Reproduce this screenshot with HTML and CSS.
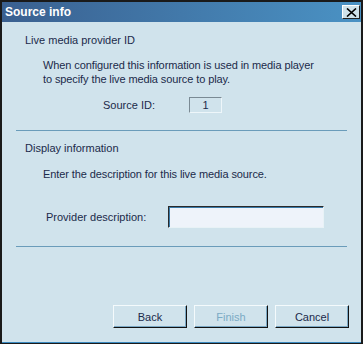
FILE: index.html
```html
<!DOCTYPE html>
<html>
<head>
<meta charset="utf-8">
<link rel="stylesheet" href="styles.css">
</head>
<body>
<div class="window">
  <div class="titlebar">
    <span class="title">Source info</span>
    <span class="close"><svg width="11" height="9" viewBox="0 0 11 9"><path d="M1 0.5 L10 8.5 M10 0.5 L1 8.5" stroke="#000" stroke-width="1.6"/></svg></span>
  </div>
  <div class="body">
    <section class="group">
      <div class="heading">Live media provider ID</div>
      <p class="desc">When configured this information is used in media player<br>to specify the live media source to play.</p>
      <div class="row id-row">
        <span class="label">Source ID:</span>
        <span class="idbox">1</span>
      </div>
    </section>
    <hr class="sep sep1">
    <section class="group">
      <div class="heading">Display information</div>
      <p class="desc single">Enter the description for this live media source.</p>
      <div class="row desc-row">
        <span class="label">Provider description:</span>
        <span class="input"></span>
      </div>
    </section>
    <hr class="sep sep2">
    <div class="buttons">
      <button class="btn">Back</button>
      <button class="btn disabled">Finish</button>
      <button class="btn">Cancel</button>
    </div>
  </div>
</div>
</body>
</html>
```
FILE: styles.css
```css
html, body {
  margin: 0;
  padding: 0;
}
body {
  width: 363px;
  height: 344px;
  font-family: "Liberation Sans", Arial, sans-serif;
  font-size: 11px;
  color: #1b2a4a;
  white-space: nowrap;
}
.window {
  box-sizing: border-box;
  width: 363px;
  height: 344px;
  background: #d0e3ec;
  border: 2px solid #1a1a1a;
  border-bottom-width: 1px;
  display: flex;
  flex-direction: column;
  box-shadow: inset 0 -1px 0 #3a8ac0;
}
.titlebar {
  height: 20px;
  background: linear-gradient(to right, #3a6090, #4a92c4);
  display: flex;
  align-items: center;
  justify-content: space-between;
  padding: 0 1px 0 3px;
}
.title {
  color: #fff;
  font-weight: bold;
  font-size: 12px;
}
.close {
  width: 18px;
  height: 14px;
  box-sizing: border-box;
  background: #cfe2ea;
  border: 1px solid;
  border-color: #fff #222 #222 #fff;
  display: flex;
  align-items: center;
  justify-content: center;
}
.body {
  flex: 1;
  padding: 11px 12px 0 12px;
  display: flex;
  flex-direction: column;
}
.group {
  padding-left: 11px;
}
.heading {
  line-height: 14px;
}
.desc {
  margin: 11px 0 0 18px;
  line-height: 14px;
  letter-spacing: -0.1px;
}
.desc.single {
  margin-top: 12px;
}
.row {
  display: flex;
  align-items: center;
}
.id-row {
  margin-top: 11px;
  padding-left: 78px;
}
.id-row .label {
  width: 86px;
}
.idbox {
  box-sizing: border-box;
  width: 33px;
  height: 16px;
  border: 1px solid;
  border-color: #7a8a94 #eef6fa #eef6fa #7a8a94;
  text-align: center;
  line-height: 14px;
}
.desc-row {
  margin-top: 25px;
  padding-left: 21px;
}
.desc-row .label {
  width: 122px;
}
.input {
  box-sizing: border-box;
  width: 156px;
  height: 22px;
  background: #eef3fa;
  border: 1px solid;
  border-color: #2a2a2a #e8f2f6 #e8f2f6 #2a2a2a;
  box-shadow: inset 1px 1px 0 #3a7aa8;
}
.sep {
  border: 0;
  height: 1px;
  background: #6a9cba;
}
.sep1 {
  margin: 17px 2px 10px 2px;
}
.sep2 {
  margin: 18px 2px 0 2px;
}
.buttons {
  margin-top: 58px;
  display: flex;
  justify-content: flex-end;
  gap: 7px;
  padding-right: 0;
}
.btn {
  box-sizing: border-box;
  width: 74px;
  height: 23px;
  font-family: inherit;
  font-size: 11px;
  color: #1b2a4a;
  background: #d0e3ec;
  border: 1px solid;
  border-color: #f4fafc #111 #111 #f4fafc;
  box-shadow: inset -1px -1px 0 #7aa8c4;
  padding: 0;
}
.btn.disabled {
  color: #7aaac4;
}
```
